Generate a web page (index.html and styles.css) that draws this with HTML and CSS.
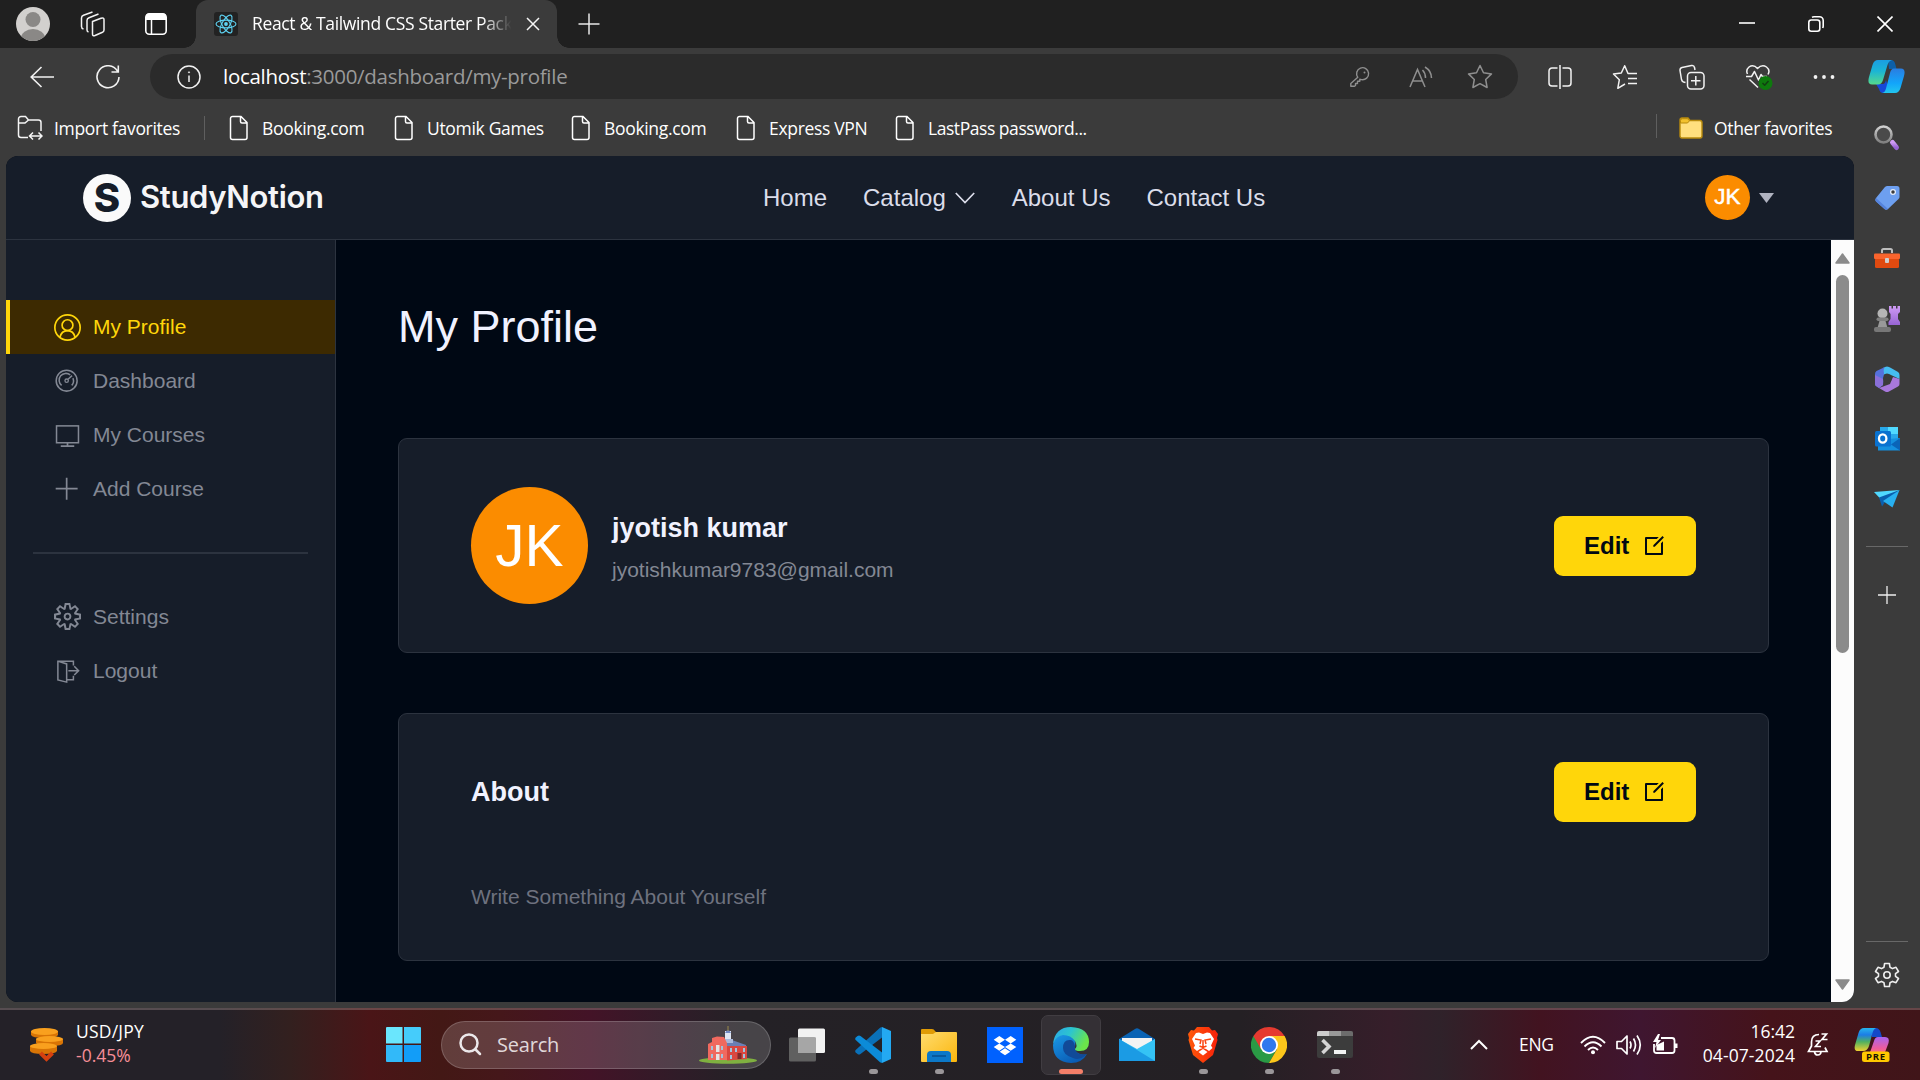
FILE: index.html
```html
<!DOCTYPE html>
<html lang="en">
<head>
<meta charset="utf-8">
<title>React &amp; Tailwind CSS Starter Pack</title>
<link rel="stylesheet" href="styles.css">
</head>
<body>
<svg class="defs" width="0" height="0" aria-hidden="true">
  <defs>
    <linearGradient id="cpA" x1="0" y1="0" x2="0" y2="1"><stop offset="0" stop-color="#1b9de2"/><stop offset=".45" stop-color="#1bb5d5"/><stop offset="1" stop-color="#55d98c"/></linearGradient>
    <linearGradient id="cpB" x1="0" y1="0" x2="0" y2="1"><stop offset="0" stop-color="#2a7de1"/><stop offset=".6" stop-color="#12a5fb"/><stop offset="1" stop-color="#22c5ee"/></linearGradient>
    <linearGradient id="folder" x1="0" y1="0" x2="1" y2="1"><stop offset="0" stop-color="#ffdc6e"/><stop offset="1" stop-color="#fbb60d"/></linearGradient>
    <linearGradient id="edgeA" x1="0" y1="0" x2="1" y2=".4"><stop offset="0" stop-color="#2aa5ea"/><stop offset=".5" stop-color="#2cc5cf"/><stop offset="1" stop-color="#6be54a"/></linearGradient>
    <linearGradient id="edgeB" x1="0" y1="0" x2=".6" y2="1"><stop offset="0" stop-color="#1a9be8"/><stop offset="1" stop-color="#0a5bb4"/></linearGradient>
    <linearGradient id="brave" x1="0" y1="0" x2="1" y2="0"><stop offset="0" stop-color="#ff5a0a"/><stop offset="1" stop-color="#f8200a"/></linearGradient>
    <linearGradient id="rainL" x1="0" y1="0" x2="0" y2="1"><stop offset="0" stop-color="#26b5ee"/><stop offset=".3" stop-color="#1c7ce6"/><stop offset=".6" stop-color="#50b060"/><stop offset="1" stop-color="#f0d030"/></linearGradient>
    <linearGradient id="rainR" x1="0" y1="0" x2="0" y2="1"><stop offset="0" stop-color="#a864f0"/><stop offset=".6" stop-color="#ee5c9c"/><stop offset="1" stop-color="#fb8a5c"/></linearGradient>
    <linearGradient id="greyV" x1="0" y1="0" x2="0" y2="1"><stop offset="0" stop-color="#d0d0d0"/><stop offset="1" stop-color="#808080"/></linearGradient>
    <linearGradient id="purple" x1="0" y1="0" x2="0" y2="1"><stop offset="0" stop-color="#cf9bf5"/><stop offset="1" stop-color="#9764d4"/></linearGradient>
    <symbol id="page" viewBox="0 0 20 26"><path d="M3.500 1.500H12l6 6V22.500a2 2 0 0 1-2 2H3.500a2 2 0 0 1-2-2V3.500a2 2 0 0 1 2-2zM11.500 1.500V6.500a1.500 1.500 0 0 0 1.500 1.500H18" fill="none" stroke="#fff" stroke-width="1.500"/></symbol>
    <symbol id="edit" viewBox="0 0 24 24"><path d="M16.757 3l-2 2H5v14h14V9.243l2-2V20a1 1 0 0 1-1 1H4a1 1 0 0 1-1-1V4a1 1 0 0 1 1-1h12.757zm3.728-.9L21.900 3.516l-9.192 9.192-1.412.003-.002-1.417L20.485 2.100z"/></symbol>
  </defs>
</svg>
<div class="screen">

  <header class="tabs">
    <svg class="t-user" width="34" height="34" viewBox="0 0 34 34"><clipPath id="u"><circle cx="17" cy="17" r="17"/></clipPath><g clip-path="url(#u)"><rect width="34" height="34" fill="#d2d0ce"/><circle cx="17" cy="12.500" r="7.500" fill="#8a8886"/><ellipse cx="17" cy="31" rx="12" ry="9" fill="#8a8886"/></g></svg>
    <svg class="t-spaces" width="26" height="26" viewBox="0 0 26 26" fill="none" stroke="#f2f2f2" stroke-width="1.500" stroke-linejoin="round"><path d="M12.500 10.500L21 7.200q3-1 3 1.500V19q0 1.500-1.500 2.200l-7.500 3.300q-2.500 1-2.500-1.500z"/><path d="M8.500 21q-1.500-.5-1.500-2V9.500q0-2 2-2.800L18.500 3M3.500 18Q1.500 17.500 1.500 15.500V7q0-2 2-2.800L12.500 1"/></svg>
    <svg class="t-act" width="24" height="24" viewBox="0 0 24 24"><rect x="1.800" y="1.800" width="20.400" height="20.400" rx="3.500" fill="none" stroke="#fff" stroke-width="1.600"/><path d="M2 8V4.500A3 3 0 0 1 5 1.500H19a3 3 0 0 1 3 3V8z" fill="#fff"/><path d="M7.500 8V22" stroke="#fff" stroke-width="1.500"/></svg>
    <div class="tab">
      <svg width="24" height="24" viewBox="0 0 24 24" fill="none" stroke="#5ed3f3" stroke-width="1.100"><rect width="24" height="24" rx="3" fill="#222" stroke="none"/><ellipse cx="12" cy="12" rx="10" ry="3.900"/><ellipse cx="12" cy="12" rx="10" ry="3.900" transform="rotate(60 12 12)"/><ellipse cx="12" cy="12" rx="10" ry="3.900" transform="rotate(120 12 12)"/><circle cx="12" cy="12" r="1.900" fill="#5ed3f3" stroke="none"/></svg>
      <span class="tab-title">React &amp; Tailwind CSS Starter Pack</span>
      <svg class="tab-x" width="14" height="14" viewBox="0 0 14 14" stroke="#f5f5f5" stroke-width="1.500"><path d="M1 1L13 13M13 1L1 13"/></svg>
    </div>
    <svg class="t-plus" width="22" height="22" viewBox="0 0 22 22" stroke="#e8e8e8" stroke-width="1.500"><path d="M11 .5V21.500M.5 11H21.500"/></svg>
    <div class="win">
      <svg width="16" height="16" viewBox="0 0 16 16" stroke="#fff" stroke-width="1.600"><path d="M0 7H16"/></svg>
      <svg width="16" height="16" viewBox="0 0 16 16" stroke="#fff" stroke-width="1.600" fill="none"><rect x=".8" y="4" width="11" height="11.200" rx="2.500"/><path d="M4 1.300Q5 .8 6 .8H11.500A3.700 3.700 0 0 1 15.200 4.500V10q0 1-.5 2"/></svg>
      <svg width="16" height="16" viewBox="0 0 16 16" stroke="#fff" stroke-width="1.600"><path d="M.5 .5L15.500 15.500M15.500 .5L.5 15.500"/></svg>
    </div>
  </header>

  <div class="toolbar">
    <svg class="b-back" width="24" height="22" viewBox="0 0 24 22" fill="none" stroke="#f2f2f2" stroke-width="1.600"><path d="M24 11H1M11.500 1L1.200 11L11.500 21"/></svg>
    <svg class="b-load" width="24" height="24" viewBox="0 0 24 24" fill="none" stroke="#f2f2f2" stroke-width="1.600"><path d="M21.500 6.200A11 11 0 1 0 23 12M22.300 .5V7H15.500"/></svg>
    <div class="address">
      <svg width="24" height="24" viewBox="0 0 24 24" fill="none" stroke="#f2f2f2" stroke-width="1.500"><circle cx="12" cy="12" r="11"/><path d="M12 10.500V17"/><circle cx="12" cy="7.300" r=".6" fill="#f2f2f2" stroke-width=".8"/></svg>
      <span class="url"><b>localhost</b>:3000/dashboard/my-profile</span>
      <svg class="a-key" width="20" height="22" viewBox="0 0 20 20" fill="none" stroke="#8f8f8f" stroke-width="1.400" stroke-linejoin="round"><path d="M7.800 10.300A6 6 0 1 1 11.500 12.600L9.800 12.300V14.300H7.500V16.500H5.500V18.500L4.500 19.300H.8V16.500z"/><circle cx="14.500" cy="5.500" r="1" fill="#8f8f8f" stroke="none"/></svg>
      <svg class="a-read" width="24" height="22" viewBox="0 0 24 22" fill="none" stroke="#8f8f8f" stroke-width="1.500"><path d="M1 21L8.500 3.500L16 21M3.800 15H13.300M13.500 4Q16.500 7 16.500 12M16 1Q22.500 5 22.500 12"/></svg>
      <svg class="a-star" width="26" height="25" viewBox="0 0 26 25" fill="none" stroke="#8f8f8f" stroke-width="1.500" stroke-linejoin="round"><path d="M13 1.500L16.500 8.800L24.500 9.900L18.700 15.500L20.100 23.500L13 19.700L5.900 23.500L7.300 15.500L1.500 9.900L9.500 8.800z"/></svg>
    </div>
    <div class="tools">
      <svg width="24" height="26" viewBox="0 0 24 26" fill="none" stroke="#f2f2f2" stroke-width="1.500"><path d="M12 1V25M9.500 4H4A3 3 0 0 0 1 7V19a3 3 0 0 0 3 3H9.500M14.500 4H20a3 3 0 0 1 3 3V19a3 3 0 0 1-3 3H14.500"/></svg>
      <svg width="26" height="26" viewBox="0 0 26 26" fill="none" stroke="#f2f2f2" stroke-width="1.500" stroke-linejoin="round"><path d="M25 9.500H16L12.700 1.800L9.300 9L1.500 10L7.300 15.800L5.800 24.300L13 20M16 14.500H25M16 19.500H25"/></svg>
      <svg width="26" height="26" viewBox="0 0 26 26" fill="none" stroke="#f2f2f2" stroke-width="1.500" stroke-linejoin="round"><path d="M6.500 18.500L4.500 18Q3 17.500 2.500 15.500L1 6.500Q.8 4 3 3.500L12.500 1.500Q15 1 15.500 3.500L16 6"/><rect x="8.500" y="8.500" width="16.500" height="16.500" rx="3.500"/><path d="M16.800 12V21.500M12 16.800H21.500"/></svg>
      <svg width="28" height="26" viewBox="0 0 28 26" fill="none" stroke="#f2f2f2" stroke-width="1.500" stroke-linejoin="round"><path d="M2.500 10Q.5 6 4 3Q8.500 0 12.500 4.500Q17 0 21.500 3Q25.500 6 23 10.500M1 12.500H6.500L9.500 7.500L13.500 16L16 10.500L17.500 12.500H22M4.500 15.500L13 23.500"/><circle cx="20.500" cy="19" r="7" fill="#0e7a0d" stroke="none"/><path d="M17.500 19L19.700 21.200L23.500 17" stroke="#123f12"/></svg>
      <svg width="22" height="6" viewBox="0 0 22 6" fill="#f2f2f2"><circle cx="2.500" cy="3" r="1.900"/><circle cx="11" cy="3" r="1.900"/><circle cx="19.500" cy="3" r="1.900"/></svg>
    </div>
    <svg class="copilot" width="37" height="33" viewBox="0 0 37 33"><path d="M20 0H23Q26.500 0 27.500 5L28.500 9H21z" fill="#0d5fa8"/><path d="M8 24H15Q17 24 18 20L20 27Q19 33 15 33Q12 33 11 29z" fill="#1648d8"/><path d="M10 0H24Q20.500 1 19.500 5L15 20Q13.500 24.500 10 24.500H4Q-1 24.500 1 17L4.500 5Q6 0 10 0z" fill="url(#cpA)"/><path d="M26 8.500H33Q38 8.500 36 16L32.500 28Q31 33 27 33H14Q17 32.500 18 28.500L22 13Q23 8.500 26 8.500z" fill="url(#cpB)"/></svg>
  </div>

  <div class="workspace">
    <div class="view">
      <nav class="favs">
        <a class="fav imp"><svg width="26" height="26" viewBox="0 0 26 26" fill="none" stroke="#f5f5f5" stroke-width="1.500"><path d="M11 22.500H4A2.500 2.500 0 0 1 1.500 20V4A2.500 2.500 0 0 1 4 1.500H8.500L11.500 5H21.500A2.500 2.500 0 0 1 24 7.500V16M1.500 8H8L11.500 5M13 21H25M16 17.500L12.500 21L16 24.500M21.500 17.500L25 21L21.500 24.500"/></svg><span>Import favorites</span></a>
        <i class="sep"></i>
        <a class="fav f1"><svg width="20" height="26"><use href="#page"/></svg><span>Booking.com</span></a>
        <a class="fav f2"><svg width="20" height="26"><use href="#page"/></svg><span>Utomik Games</span></a>
        <a class="fav f3"><svg width="20" height="26"><use href="#page"/></svg><span>Booking.com</span></a>
        <a class="fav f4"><svg width="20" height="26"><use href="#page"/></svg><span>Express VPN</span></a>
        <a class="fav f5"><svg width="20" height="26"><use href="#page"/></svg><span>LastPass password...</span></a>
        <i class="sep sep2"></i>
        <a class="fav f6"><svg width="24" height="22" viewBox="0 0 24 22"><path d="M1 3A2 2 0 0 1 3 1H9L11 3.500H21A2.300 2.300 0 0 1 23 5.800V19A2 2 0 0 1 21 21H3A2 2 0 0 1 1 19z" fill="#ffdf7e" stroke="#b88a0c" stroke-width="1.400"/><path d="M1.500 6V3.500A2 2 0 0 1 3.500 1.700H8.500L10.500 3.800L8.500 6z" fill="#f2c12e" stroke="#b88a0c"/></svg><span>Other favorites</span></a>
      </nav>

      <div class="site">
        <div class="navbar">
          <div class="logo">
            <span class="mark">S</span>
            <span class="brand">StudyNotion</span>
          </div>
          <div class="links">
            <a>Home</a>
            <a class="cat">Catalog<svg width="20" height="12" viewBox="0 0 20 12" fill="none" stroke="#dbddea" stroke-width="1.700"><path d="M.8 1L10 10.500L19.200 1"/></svg></a>
            <a>About Us</a>
            <a>Contact Us</a>
          </div>
          <div class="me"><span class="avatar sm">JK</span><svg width="15" height="10" viewBox="0 0 15 10"><path d="M0 0H15L7.500 10z" fill="#afb2bf"/></svg></div>
        </div>
        <div class="columns">
          <aside class="menu">
            <a class="item on"><svg width="27" height="27" viewBox="0 0 16 16" fill="none" stroke="currentColor"><circle cx="8" cy="8" r="7.500"/><circle cx="8" cy="6.600" r="3.200"/><path d="M3.500 13.800C4.100 11.300 5.900 9.850 8 9.850S11.900 11.300 12.500 13.800"/></svg>My Profile</a>
            <a class="item"><svg width="27" height="27" viewBox="0 0 16 16" fill="none" stroke="currentColor"><circle cx="7.500" cy="7.500" r="6.200" stroke-width=".9"/><circle cx="7.500" cy="7.500" r="1" stroke-width=".8"/><path d="M4.500 10.300A4 4 0 0 1 9.600 4.100M11.200 6A4 4 0 0 1 10.500 10.300M8.300 6.700L10.700 4.500" stroke-width=".9"/></svg>Dashboard</a>
            <a class="item"><svg width="27" height="27" viewBox="0 0 16 16" fill="none" stroke="currentColor"><rect x="1.500" y="2.300" width="13" height="10" stroke-width=".9"/><path d="M8 12.300V14.300M4 14.300H12" stroke-width="1"/></svg>My Courses</a>
            <a class="item"><svg width="27" height="27" viewBox="0 0 16 16" fill="none" stroke="currentColor"><path d="M7.500 1V14M1 7.500H14"/></svg>Add Course</a>
            <hr>
            <a class="item gear"><svg width="27" height="27" viewBox="0 0 24 24" fill="currentColor" fill-rule="evenodd"><path d="M19.850 8.750l4.150.83v4.840l-4.150.83 2.350 3.520-3.430 3.430-3.520-2.350-.83 4.150H9.580l-.83-4.150-3.520 2.350-3.430-3.430 2.350-3.520L0 14.420V9.580l4.150-.83L1.800 5.230 5.230 1.800l3.520 2.350L9.580 0h4.840l.83 4.150 3.520-2.350 3.430 3.430-2.350 3.520zm-1.570 5.070l4-.81v-2l-4-.81-.54-1.300 2.290-3.430-1.430-1.430-3.430 2.290-1.300-.54-.81-4h-2l-.81 4-1.300.54-3.430-2.290-1.430 1.430L6.380 8.900l-.54 1.300-4 .81v2l4 .81.54 1.300-2.290 3.430 1.430 1.430 3.430-2.290 1.300.54.81 4h2l.81-4 1.300-.54 3.430 2.290 1.430-1.430-2.290-3.430.54-1.300zm-8.186-4.672A3.430 3.430 0 0 1 12 8.570 3.440 3.440 0 0 1 15.430 12a3.430 3.430 0 1 1-5.336-2.852zm.956 4.274c.281.188.612.288.95.288A1.700 1.700 0 0 0 13.710 12a1.710 1.710 0 1 0-2.660 1.422z"/></svg>Settings</a>
            <a class="item"><svg width="27" height="27" viewBox="0 0 16 16" fill="none" stroke="currentColor" stroke-width=".9"><path d="M11.500 4.500V1.900H2.300V13L7.500 14.300V3.500L2.600 2M7.500 12.900H11.500V10.500M8.500 7.500H14.500M12 4.900L14.600 7.500L12 10.100"/></svg>Logout</a>
          </aside>
          <main class="content">
            <h1>My Profile</h1>
            <section class="card who">
              <span class="avatar lg">JK</span>
              <div class="ident"><h2>jyotish kumar</h2><p>jyotishkumar9783@gmail.com</p></div>
              <button class="edit">Edit<svg width="24" height="24"><use href="#edit"/></svg></button>
            </section>
            <section class="card about">
              <div class="head"><h2>About</h2><button class="edit">Edit<svg width="24" height="24"><use href="#edit"/></svg></button></div>
              <p>Write Something About Yourself</p>
            </section>
          </main>
          <div class="scroll">
            <svg width="15" height="11" viewBox="0 0 15 11"><path d="M7.500 1L14 10H1z" fill="#8b8b8b" stroke="#8b8b8b" stroke-width="1.500" stroke-linejoin="round"/></svg>
            <i class="thumb"></i>
            <svg width="15" height="11" viewBox="0 0 15 11"><path d="M7.500 10L1 1H14z" fill="#8b8b8b" stroke="#8b8b8b" stroke-width="1.500" stroke-linejoin="round"/></svg>
          </div>
        </div>
      </div>
    </div>

    <aside class="edgebar">
      <div class="apps">
        <svg width="28" height="28" viewBox="0 0 28 28"><circle cx="10.500" cy="10.500" r="8" fill="#4a4a4a" stroke="url(#greyV)" stroke-width="2.600"/><path d="M19.500 18.500L23.500 23.500" stroke="url(#purple)" stroke-width="5" stroke-linecap="round"/></svg>
        <svg width="28" height="28" viewBox="0 0 28 28"><path d="M14 2H24A2.500 2.500 0 0 1 26.500 4.500V13Q26.500 14 25.500 15L15 25Q13 26.500 11.500 25L3 17.500Q1.500 16 3 14L11.500 3.500Q12.500 2 14 2z" fill="#6d9ff0"/><path d="M3 14L15 25Q13 26.500 11.500 25L3 17.500Q1.500 16 3 14z" fill="#5583dc"/><circle cx="20" cy="8" r="2.400" fill="#3b3b3b" stroke="#e4ecfa" stroke-width="1.300"/></svg>
        <svg width="28" height="28" viewBox="0 0 28 28"><path d="M9 9V6.500A1.500 1.500 0 0 1 10.500 5H17.500A1.500 1.500 0 0 1 19 6.500V9" fill="none" stroke="#bdbdbd" stroke-width="2"/><rect x="2" y="14" width="24" height="10" rx="1.500" fill="#e04a10"/><rect x="1" y="9.500" width="26" height="5.500" rx="1" fill="#f9642d"/><rect x="12" y="14" width="4" height="5" rx="1" fill="#cfcfcf"/></svg>
        <svg width="28" height="28" viewBox="0 0 28 28"><path d="M16 1H18.500V3.500H20V1H23V3.500H24.500V1H27V7L25 9V14L27 17V20H15.500V17L17.500 14V9L16 7z" fill="url(#purple)"/><circle cx="9.500" cy="8.500" r="5" fill="#b5b5b5"/><path d="M7 14H12L14.500 23H4.500z" fill="#999"/><rect x="3.500" y="12.500" width="12" height="3.500" rx="1.700" fill="#808080"/><rect x="1" y="22" width="17" height="5" rx="2" fill="#777"/></svg>
        <svg width="28" height="28" viewBox="0 0 28 28"><path d="M10 3Q14 0 18 3L25 7Q26.500 8 26.500 10V14L18 10Q14 7 10 10z" fill="#45bdf0"/><path d="M12 2Q10 4 11 8L10 20L6 23L3 21Q2 20.300 2 19V9Q2 7 3.500 6z" fill="#5571dc"/><path d="M2 10L10 14V20L6 23L3 21Q2 20.300 2 19z" fill="#8a6fd8"/><path d="M26.500 14V19Q26.500 20.500 25 21.500L16 26.500Q14 27.500 12 26.500L6 23L17 19L20 12z" fill="#a878dc"/><circle cx="14.300" cy="13.500" r="4.300" fill="#3b3b3b"/></svg>
        <svg width="28" height="28" viewBox="0 0 28 28"><rect x="7" y="2" width="18" height="14" fill="#28a8ea"/><path d="M15 2H25V9H15z" fill="#50d9ff"/><path d="M5 15L27 13V25.500H5z" fill="#1490df"/><path d="M27 13L18 19.500L27 25.500z" fill="#0a64b8"/><rect x="2" y="6" width="16" height="15.500" rx="1.500" fill="#0a72d0"/><ellipse cx="9.700" cy="13.500" rx="3.700" ry="4.200" fill="none" stroke="#fff" stroke-width="2.300"/></svg>
        <svg width="28" height="28" viewBox="0 0 28 28"><path d="M1 7L26.500 5L9 15.500z" fill="#50d9ff"/><path d="M26.500 5L6 12.500L9 21.500L12 17z" fill="#0a5fae"/><path d="M26.500 5L10 16L19.500 22.500z" fill="#28b0f0"/></svg>
      </div>
      <hr>
      <svg class="e-plus" width="18" height="18" viewBox="0 0 18 18" stroke="#eee" stroke-width="1.300"><path d="M9 0V18M0 9H18"/></svg>
      <hr class="low">
      <svg class="e-gear" width="26" height="26" viewBox="0 0 26 26" fill="none" stroke="#eee" stroke-width="1.600" stroke-linejoin="round"><path d="M10.600 1.500H15.400L16 5.200L18.500 6.600L22 5.300L24.500 9.500L21.500 11.700V14.300L24.500 16.500L22 20.700L18.500 19.400L16 20.800L15.400 24.500H10.600L10 20.800L7.500 19.400L4 20.700L1.500 16.500L4.500 14.300V11.700L1.500 9.500L4 5.300L7.500 6.600L10 5.200z"/><circle cx="13" cy="13" r="3.200"/></svg>
    </aside>
  </div>

  <footer class="taskbar">
    <div class="widget">
      <svg width="34" height="36" viewBox="0 0 34 36"><g fill="#d87405"><path d="M0 19V24Q1 27 13.500 27T27 24V19z"/><path d="M6 12V16Q7 19 20 19T33 16V12z"/><path d="M1 4V8Q2 11 14.500 11T28 8V4z"/></g><g fill="#f9a01e"><ellipse cx="13.500" cy="19" rx="13.500" ry="3"/><ellipse cx="19.500" cy="12" rx="13.500" ry="3"/><ellipse cx="14.500" cy="4.500" rx="13.500" ry="3.500"/></g><path d="M10.500 26L16.500 32L22.500 26" fill="none" stroke="#d5400f" stroke-width="4"/></svg>
      <p><span class="cur">USD/JPY</span><span class="pct">-0.45%</span></p>
    </div>
    <svg class="start" width="35" height="35" viewBox="0 0 35 35"><path fill="#6ae6fd" d="M1 0H16.500V16.500H0V1a1 1 0 0 1 1-1z"/><path fill="#45ccfb" d="M18 0H34a1 1 0 0 1 1 1V16.500H18z"/><path fill="#32b9f9" d="M0 18H16.500V35H1a1 1 0 0 1-1-1z"/><path fill="#129df8" d="M18 18H35V34a1 1 0 0 1-1 1H18z"/></svg>
    <div class="search">
      <svg width="23" height="23" viewBox="0 0 23 23" fill="none" stroke="#ece8ea" stroke-width="2.500" stroke-linecap="round"><circle cx="10" cy="10" r="8.500"/><path d="M16.500 16.500L21 21"/></svg>
      <span>Search</span>
      <svg class="hall" width="58" height="38" viewBox="0 0 58 38"><ellipse cx="29" cy="34.500" rx="29" ry="3.300" fill="#7fb040"/><path d="M25 15L30 13L47 19V22H28z" fill="#6a7fb4"/><path d="M26 5H32V16H26z" fill="#dfe6f4"/><path d="M24.500 13H34V17H24.500z" fill="#a9b9dc"/><path d="M26 7Q29 1 32 7z" fill="#7188c4"/><path d="M29 0V5" stroke="#9a8a4a"/><path d="M9 18L13 16V12L18 10.500L25 11L28 17V34H9z" fill="#f0695f"/><path d="M28 20H48V33L28 34.500z" fill="#d9473f"/><g fill="#a3c4dc"><path d="M12 20h2v4h-2zM12 28h2v4h-2zM22 20h2v4h-2zM22 28h2v4h-2zM31 22h2v4h-2zM31 29h2v4h-2zM36 22h2v4h-2zM44 22h2v4h-2zM44 28h2v4h-2z"/><path d="M17 19h3.500v7H17zM17 28h3.500v6H17z" fill="#e6e4e4"/><path d="M38.500 27h4v6h-4z" fill="#7d2a2a"/></g></svg>
    </div>
    <div class="pins">
      <span class="pin"><svg width="36" height="36" viewBox="0 0 36 36"><rect x="9" y="1.500" width="27" height="24.500" rx="1.500" fill="#f2f2f2"/><rect x="0" y="10.500" width="27" height="24" rx="1.500" fill="#606060"/><path d="M9 10.500H27V26H9z" fill="#a6a6a6"/></svg></span>
      <span class="pin run"><svg width="36" height="36" viewBox="0 0 36 36"><path d="M27 0L36 4V32L27 36z" fill="#23a9f2"/><path d="M27 0V10.500L5.500 27Q4 28 2.500 27L.7 25.500Q-.3 24 .7 23L25 .8z" fill="#0a70b8"/><path d="M27 36V25.500L5.500 9Q4 8 2.500 9L.7 10.500Q-.3 12 .7 13L25 35.200z" fill="#0c8bd8"/></svg></span>
      <span class="pin run"><svg width="36" height="36" viewBox="0 0 36 36"><path d="M0 8V3Q0 2 1 2H11Q13 2 14 4L15 5V10H0z" fill="#e09b05"/><path d="M0 7H12L15 5H35Q36 5 36 6V34Q36 35 35 35H1Q0 35 0 34z" fill="url(#folder)"/><path d="M6 35V28Q6 24 10 24H26Q30 24 30 28V35z" fill="#0c78c8"/><path d="M11 29H25" stroke="#074f8f" stroke-width="1.500"/></svg></span>
      <span class="pin"><svg width="36" height="36" viewBox="0 0 36 36"><rect width="36" height="36" fill="#0061fe"/><path fill="#fff" d="M12.300 9L18 12.700L12.300 16.400L6.700 12.700zM23.700 9L29.300 12.700L23.700 16.400L18 12.700zM12.300 16.400L18 20.100L12.300 23.700L6.700 20.100zM23.700 16.400L29.300 20.100L23.700 23.700L18 20.100zM18 21.300L23.300 24.700L18 28.200L12.700 24.700z"/></svg></span>
      <span class="pin run active"><svg width="36" height="36" viewBox="0 0 36 36"><path d="M1 14Q6 5 16 8Q24 11 22 20Q21 25 27 27Q32 28 34 27Q29 36 18 36Q0 35 0 18z" fill="url(#edgeB)"/><path d="M10 21Q10 12 18 13Q21 14 22 19Q21 25 27 27Q32 28 34 27Q27 34 20 31Q10 28 10 21z" fill="#114a98"/><path d="M0 17Q2 0 18 0Q36 1 36 15Q36 24 27 24Q22 24 22 22Q25 19 22 14Q18 8 10 8Q3 9 0 17z" fill="url(#edgeA)"/></svg></span>
      <span class="pin"><svg width="36" height="36" viewBox="0 0 36 36"><path d="M0 12L16 2Q18 .5 20 2L36 12V20H0z" fill="#0a63b4"/><path d="M3 11H33V24H3z" fill="#f3f3f3"/><path d="M0 12L18 22L36 12V33.500Q36 34 35 34H1Q0 34 0 33z" fill="#35c3f5"/><path d="M0 12L36 34H1Q0 34 0 33z" fill="#1b9be4"/></svg></span>
      <span class="pin run"><svg width="36" height="36" viewBox="0 0 36 36"><path d="M12 0H24L27 3.500L30 3L33 7L32 11L32.500 13L28 28L18 36L8 28L3.500 13L4 11L3 7L6 3L9 3.500z" fill="url(#brave)"/><path d="M18 7L22 5.500L25 6L29 12L26 18.500L27.500 21L24 24L21 22L18 21L15 22L12 24L8.500 21L10 18.500L7 12L11 6L14 5.500z" fill="#fff"/><path d="M18 22L22.500 25L18 28.500L13.500 25z" fill="#fff"/><path d="M10 12L16 13L15 17M26 12L20 13L21 17M14.500 19L18 20.500L21.500 19M18 13V20" fill="none" stroke="#fb4510" stroke-width="1.500"/></svg></span>
      <span class="pin run"><svg width="36" height="36" viewBox="0 0 36 36"><path d="M18 18L2.400 9A18 18 0 0 0 18 36L25.800 22.500z" fill="#2a9a45"/><path d="M18 9H33.600A18 18 0 0 1 18 36L25.800 22.500z" fill="#fcc61b"/><path d="M2.400 9L10.200 22.500L18 9H33.600Q28 0 18 0T2.400 9z" fill="#e53a30"/><circle cx="18" cy="18" r="9" fill="#fff"/><circle cx="18" cy="18" r="7.200" fill="#2f78ee"/></svg></span>
      <span class="pin run"><svg width="36" height="36" viewBox="0 0 36 36"><rect x="0" y="4" width="36" height="27" rx="2" fill="#3c3c3c"/><path d="M2 4H12V9H0V6Q0 4 2 4z" fill="#ccc"/><path d="M12 4H24V9H12z" fill="#999"/><path d="M24 4H34Q36 4 36 6V9H24z" fill="#6c6c6c"/><path d="M5.500 13L12 19.500L5.500 26" fill="none" stroke="#d5d5d5" stroke-width="3.600"/><rect x="17" y="23" width="12" height="4" fill="#f2f2f2"/></svg></span>
    </div>
    <div class="tray">
      <svg class="y-up" width="18" height="11" viewBox="0 0 18 11" fill="none" stroke="#fff" stroke-width="2"><path d="M1 10L9 2L17 10"/></svg>
      <span class="eng">ENG</span>
      <svg class="y-wifi" width="26" height="20" viewBox="0 0 26 20" fill="none" stroke="#fff" stroke-width="1.900"><path d="M1 8Q13-4.500 25 8M4.500 11.500Q13 3 21.500 11.500M8 15Q13 10 18 15"/><circle cx="13" cy="17.300" r="2" fill="#fff" stroke="none"/></svg>
      <svg class="y-vol" width="26" height="22" viewBox="0 0 26 22" fill="none" stroke="#fff" stroke-width="1.700" stroke-linejoin="round"><path d="M1 7.500H5.500L11 2V20L5.500 14.500H1zM14 7.500Q16 11 14 14.500M17.500 4.500Q21.500 11 17.500 17.500M21 1.500Q27.500 11 21 20.500"/></svg>
      <svg class="y-bat" width="25" height="21" viewBox="0 0 25 21" fill="none" stroke="#fff" stroke-width="1.800"><path d="M8 4H19Q21.500 4 21.500 6.500V16.500Q21.500 19 19 19H3.500Q1 19 1 16.500V10"/><path d="M22 9.500H24.500V14H22z" fill="#fff" stroke="none"/><path d="M3.500 11L11 7.500V16.500H3.500z" fill="#fff" stroke="none"/><path d="M5 0L0 8H3.500L2 14L8 6H5L7 0z" fill="#fff" stroke="none"/></svg>
      <p class="clock"><span>16:42</span><span class="date">04-07-2024</span></p>
      <svg class="y-bell" width="22" height="23" viewBox="0 0 22 23" fill="none" stroke="#fff" stroke-width="1.700"><path d="M12 1.500Q4.500 1.500 4.500 9V13L1.500 18.500H20L18 14.500M7.500 19Q8 22 10.800 22T14 19M14.500 1H19.500L15 6.500H20.500M8.500 8H13L8.500 13.500H14"/></svg>
      <svg class="y-cp" width="36" height="36" viewBox="0 0 36 36"><path d="M18 1H22Q25 1 26.500 5L28 10H18z" fill="#1348c8"/><path d="M10 1H22Q19.500 2 18.500 6L15 19Q13.500 24 9 24H4Q-.5 24 1 18L4.500 6Q6 1 10 1z" fill="url(#rainL)"/><path d="M24 10H31Q36 10 34.500 16L31.500 24Q30 29 27 29H10Q15 28 16.500 24L20 14Q21 10 24 10z" fill="url(#rainR)"/><rect x="8" y="24.500" width="27.500" height="10.500" rx="2.500" fill="#ffc800"/><text class="pre" x="22" y="33.200" text-anchor="middle">PRE</text></svg>
    </div>
  </footer>
</div>
</body>
</html>
```
FILE: styles.css
```css
* { box-sizing: border-box; }
body { margin: 0; background: #3b3b3b; overflow: hidden; }
h1, h2, p, hr { margin: 0; }
svg { display: block; flex: none; }
.defs { position: absolute; }
.screen { width: 1920px; height: 1080px; display: flex; flex-direction: column; font-family: "Open Sans", "Noto Sans", sans-serif; color: #fff; white-space: nowrap; }

/* tab strip */
.tabs { height: 48px; background: #202020; display: flex; align-items: center; flex: none; }
.t-user { margin-left: 16px; }
.t-spaces { margin-left: 30px; }
.t-act { margin-left: 38px; }
.tab { position: relative; width: 361px; height: 48px; margin-left: 28px; padding-left: 18px; background: #3b3b3b; border-radius: 12px 12px 0 0; display: flex; align-items: center; }
.tab::before, .tab::after { content: ""; position: absolute; bottom: 0; width: 12px; height: 12px; }
.tab::before { left: -12px; background: radial-gradient(circle at 0 0, transparent 11.500px, #3b3b3b 12px); }
.tab::after { right: -12px; background: radial-gradient(circle at 100% 0, transparent 11.500px, #3b3b3b 12px); }
.tab-title { width: 262px; margin-left: 14px; padding-bottom: 2px; overflow: hidden; font-size: 17.500px; letter-spacing: -0.350px; -webkit-mask-image: linear-gradient(90deg, #000 88%, transparent 99%); mask-image: linear-gradient(90deg, #000 88%, transparent 99%); }
.tab-x { margin-left: 12px; }
.t-plus { margin-left: 21px; }
.win { margin-left: auto; margin-right: 27px; display: flex; gap: 53px; }

/* toolbar */
.toolbar { height: 57px; display: flex; align-items: center; flex: none; }
.b-back { margin-left: 30px; }
.b-load { margin-left: 42px; }
.address { width: 1368px; height: 45px; margin-left: 30px; padding: 0 25px 0 27px; background: #2b2b2b; border-radius: 23px; display: flex; align-items: center; }
.url { margin-left: 22px; padding-bottom: 2px; font-size: 20.500px; color: #9a9a9a; letter-spacing: -0.290px; }
.url b { font-weight: 400; color: #fff; }
.a-key { margin-left: auto; }
.a-read { margin-left: 39px; }
.a-star { margin-left: 34px; }
.tools { width: 287px; margin-left: 30px; display: flex; align-items: center; justify-content: space-between; }
.copilot { margin-left: 33px; }

/* favourites bar */
.workspace { height: 903px; display: flex; flex: none; }
.view { width: 1854px; padding-left: 6px; }
.favs { height: 51px; padding: 0 0 5px 11px; display: flex; align-items: center; font-size: 17.500px; letter-spacing: -0.320px; }
.fav { display: flex; align-items: center; gap: 13px; }
.fav span { padding-bottom: 1px; }
.imp { width: 187px; gap: 11px; }
.sep { width: 1px; height: 24px; background: #5f5f5f; }
.f1 { width: 165px; margin-left: 24px; }
.f2 { width: 177px; }
.f3 { width: 165px; }
.f4 { width: 159px; }
.f5 { width: 200px; letter-spacing: -0.450px; }
.sep2 { margin-left: auto; margin-bottom: 5px; }
.f6 { width: 175px; margin-left: 22px; gap: 11px; }

/* web page */
.site { width: 1848px; height: 846px; border-radius: 12px; overflow: hidden; background: #000814; font-family: "Liberation Sans", Arial, sans-serif; }
.navbar { height: 84px; background: #161d29; border-bottom: 1px solid #2c333f; display: flex; align-items: center; justify-content: space-between; padding: 0 80px 0 77px; }
.logo { display: flex; align-items: center; gap: 9px; }
.mark { width: 48px; height: 48px; border-radius: 50%; background: #fafafa; color: #161d29; font: 800 40px/48px Inter, sans-serif; text-align: center; }
.brand { width: 183px; font: 600 31px/36px Inter, sans-serif; letter-spacing: -0.330px; color: #f5f5f7; margin-bottom: 2px; }
.links { width: 502px; display: flex; gap: 36px; font-size: 24px; color: #dbddea; }
.cat { display: flex; align-items: center; gap: 9px; padding-right: 1px; }
.me { display: flex; align-items: center; gap: 9px; }
.avatar { border-radius: 50%; background: #fb8c00; color: #fff; text-align: center; flex: none; }
.sm { width: 45px; height: 45px; font-size: 22.500px; line-height: 44px; -webkit-text-stroke: .5px #fff; }
.lg { width: 117px; height: 117px; font-size: 58.500px; line-height: 118px; }
.columns { height: 762px; display: flex; }
.menu { width: 330px; padding-top: 60px; background: #161d29; border-right: 1px solid #2c333f; }
.item { height: 54px; padding-left: 48px; display: flex; align-items: center; gap: 12px; font-size: 21px; color: #838894; }
.gear svg { margin-bottom: 1px; }
.on { padding-left: 44px; border-left: 4px solid #ffd60a; background: #3d2a01; color: #ffd60a; }
.menu hr { width: 275px; height: 2px; margin: 36px 0 36px 27px; border: 0; background: #2c333f; }
.content { width: 1495px; padding: 60px 62px 0; overflow: hidden; }
h1 { font-size: 45px; font-weight: 400; line-height: 54px; margin-bottom: 84px; color: #f1f2ff; }
.card { border: 1px solid #2c333f; border-radius: 9px; background: #161d29; padding: 48px 72px; margin-bottom: 60px; }
.card h2 { font-size: 27px; line-height: 42px; color: #f1f2ff; }
.card p { font-size: 21px; line-height: 30px; color: #838894; }
.who { display: flex; align-items: center; gap: 24px; }
.ident { display: flex; flex-direction: column; gap: 6px; flex: 1; }
.head { display: flex; align-items: center; justify-content: space-between; margin-bottom: 60px; }
.card.about p { color: #6e727f; }
.edit { width: 142px; height: 60px; padding: 0 0 0 30px; border: 0; border-radius: 9px; background: #ffd60a; color: #000814; font: 700 24px "Liberation Sans", Arial, sans-serif; display: flex; align-items: center; gap: 13px; flex: none; }
.edit svg { fill: #000814; }
.scroll { width: 23px; background: #fcfcfc; padding: 13px 0 12px; display: flex; flex-direction: column; align-items: center; }
.thumb { width: 13px; height: 378px; margin: 11px 0 auto; border-radius: 7px; background: #8b8b8b; }

/* browser side bar */
.edgebar { width: 66px; display: flex; flex-direction: column; align-items: center; padding-top: 19px; }
.apps { display: flex; flex-direction: column; gap: 32.200px; }
.edgebar hr { width: 42px; height: 1px; border: 0; background: #686868; margin-top: 33px; }
.e-plus { margin-top: 39px; margin-right: 1px; }
.edgebar .low { margin-top: auto; }
.e-gear { margin: 20px 0 20px; }

/* taskbar */
.taskbar { height: 72px; padding-bottom: 1px; border-top: 2px solid rgba(150, 130, 130, .45); background: linear-gradient(90deg, #242128 0, #242128 220px, #33201f 290px, #4a1517 370px, #431815 440px, #45171a 500px, #431327 590px, #2f1c28 680px, #242126 740px, #242024 1240px, #361e2a 1390px, #2f222a 1440px, #421320 1540px, #3f1630 1640px, #45131a 1770px, #401519 1920px); display: flex; align-items: center; font-size: 17.500px; }
.widget { width: 386px; padding-left: 30px; display: flex; align-items: center; gap: 12px; }
.widget p, .clock { display: flex; flex-direction: column; line-height: 24px; padding-bottom: 3px; }
.cur { letter-spacing: .2px; }
.pct { letter-spacing: 0; color: #f78e97; }
.search { width: 330px; height: 48px; margin-left: 20px; padding: 0 13px 0 17px; border: 1px solid rgba(255, 255, 255, .18); border-radius: 24px; background: rgba(255, 255, 255, .16); display: flex; align-items: center; font-size: 20px; color: #e0d8da; }
.search span { margin-left: 15px; padding-bottom: 1px; letter-spacing: -0.200px; }
.hall { margin-left: auto; }
.pins { margin-left: 6px; display: flex; gap: 6px; }
.pin { position: relative; width: 60px; height: 60px; border-radius: 7px; display: flex; align-items: center; justify-content: center; }
.run::after { content: ""; position: absolute; left: 26px; bottom: 1px; width: 9px; height: 5px; border-radius: 3px; background: #9a9699; }
.active { background: #343035; border: 1px solid #413d42; }
.active::after { left: 17px; bottom: 0; width: 24px; background: #f47f69; }
.tray { flex: 1; display: flex; align-items: center; }
.y-up { margin-left: 105px; }
.eng { width: 36px; margin-left: 31px; padding-bottom: 1px; letter-spacing: -0.300px; }
.y-wifi { margin-left: 25px; }
.y-vol { margin-left: 10px; }
.y-bat { margin-left: 11px; }
.clock { width: 100px; margin-left: 17px; text-align: right; }
.date { letter-spacing: .1px; }
.y-bell { margin-left: 12px; }
.y-cp { margin-left: 25px; }
.pre { font: 700 9.500px "Open Sans", sans-serif; letter-spacing: .8px; fill: #1a1400; }
```
